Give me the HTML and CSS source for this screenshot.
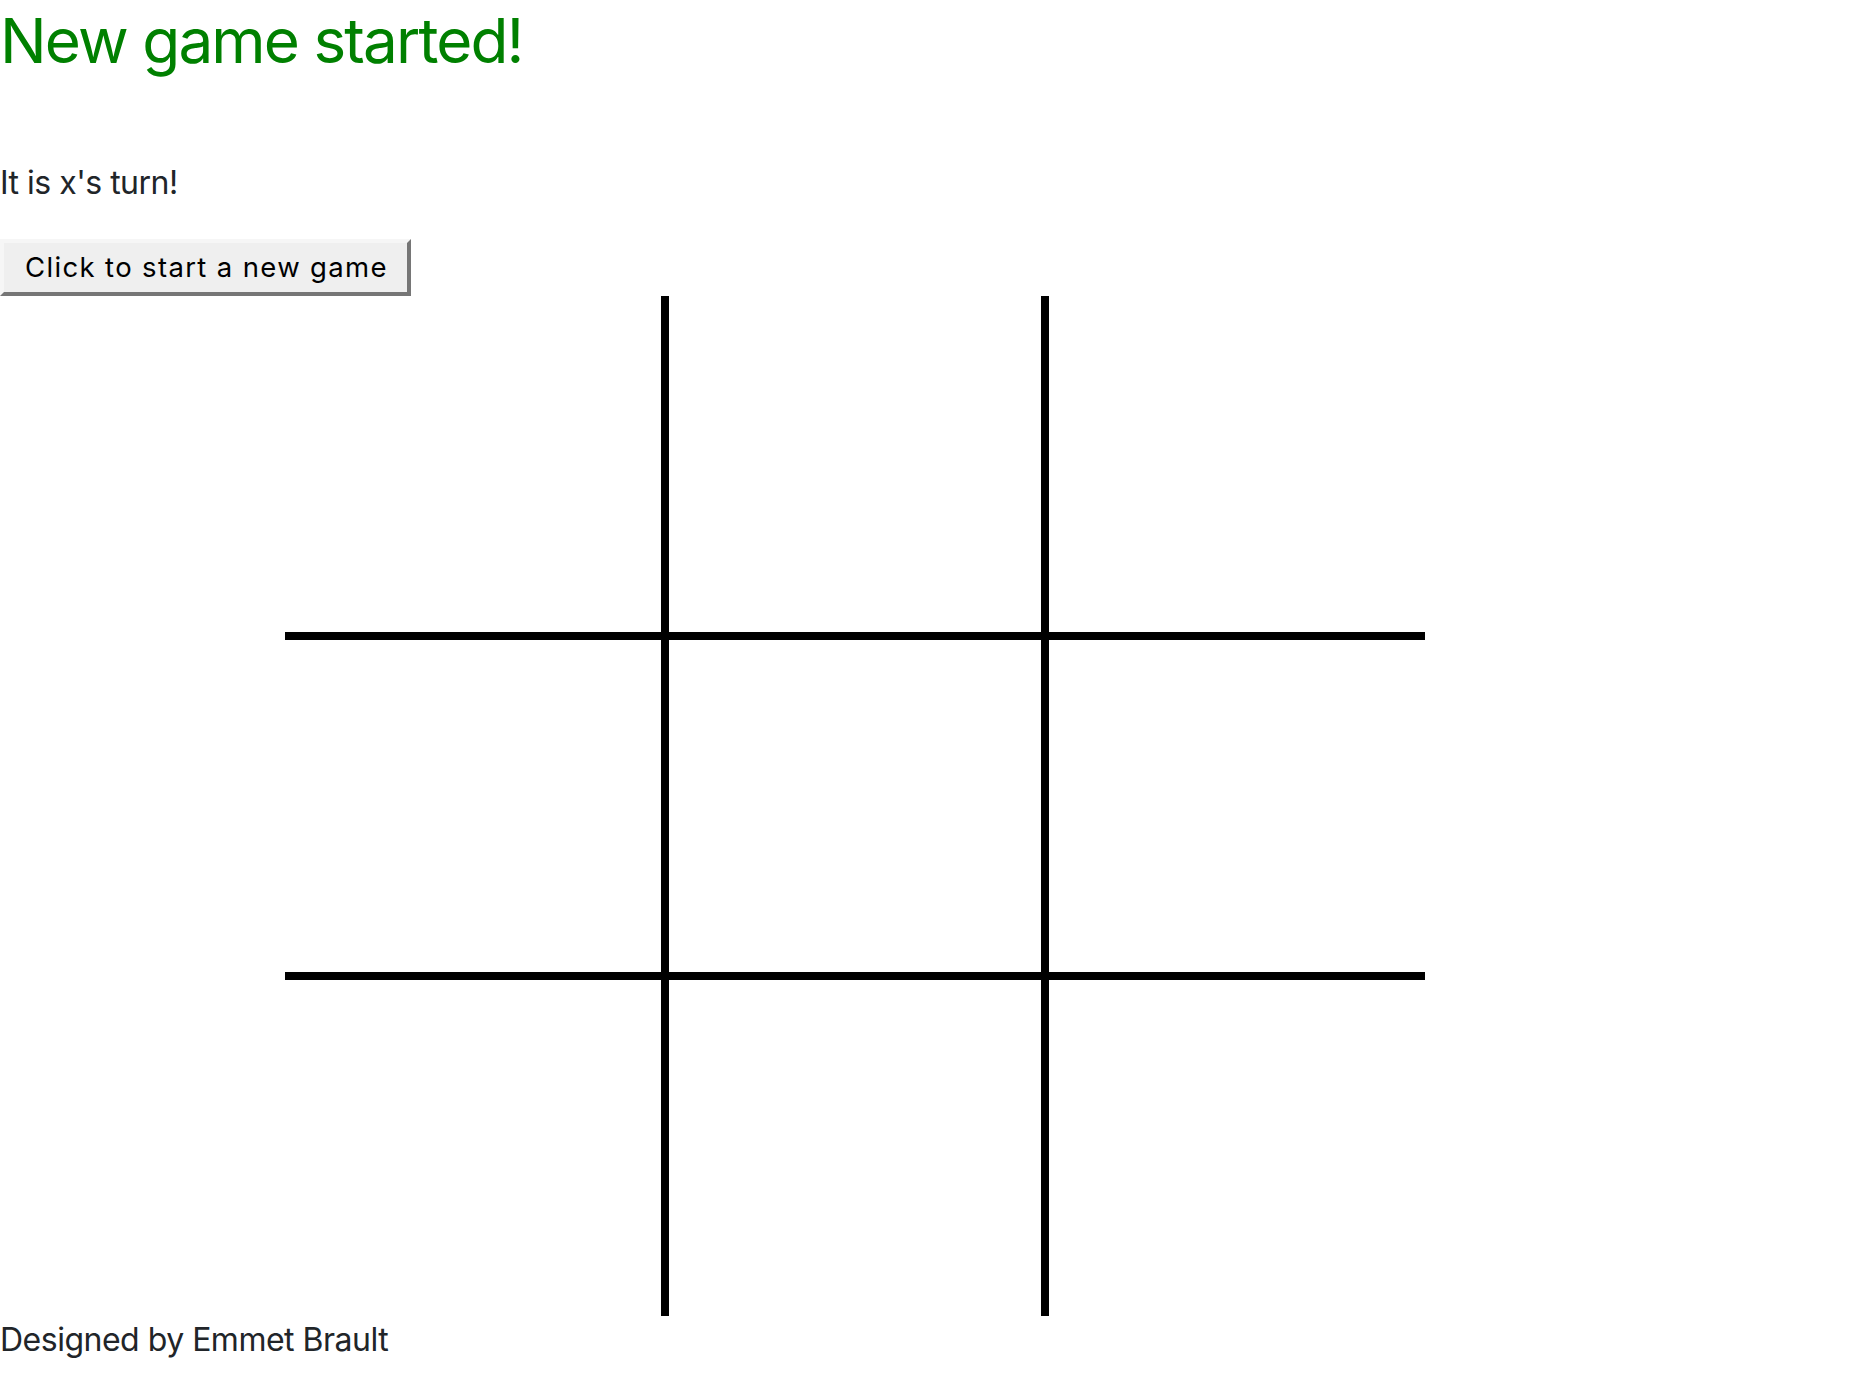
FILE: index.html
```html
<!DOCTYPE html>
<html lang="en">
<head>
<meta charset="utf-8">
<title>Tic Tac Toe</title>
<link rel="stylesheet" href="styles.css">
</head>
<body>
<h1 class="status">New game started!</h1>
<p class="turn">It is x's turn!</p>
<button class="new-game" type="button">Click to start a new game</button>
<div class="board">
  <div class="cell"></div>
  <div class="cell"></div>
  <div class="cell"></div>
  <div class="cell"></div>
  <div class="cell"></div>
  <div class="cell"></div>
  <div class="cell"></div>
  <div class="cell"></div>
  <div class="cell"></div>
</div>
<footer class="credit">Designed by Emmet Brault</footer>
</body>
</html>
```

FILE: styles.css
```css
html, body {
  margin: 0;
  padding: 0;
  background: #ffffff;
}

body {
  font-family: Inter, "Noto Sans", "Liberation Sans", sans-serif;
  color: #212529;
  font-size: 32px;
  line-height: 48px;
  letter-spacing: -0.5px;
}

.status {
  margin: 0;
  padding-top: 3px;
  color: #008000;
  font-size: 62px;
  font-weight: 400;
  line-height: 76px;
  letter-spacing: -1.9px;
}

.turn {
  margin: 80px 0 32px 0;
}

.new-game {
  display: block;
  box-sizing: border-box;
  width: 411px;
  margin: 0;
  font-family: Inter, "Noto Sans", "Liberation Sans", sans-serif;
  font-size: 27.5px;
  line-height: 33px;
  letter-spacing: 1.35px;
  text-align: center;
  color: #000000;
  background: #efefef;
  border-style: solid;
  border-width: 4px;
  border-color: #f6f6f6 #767676 #767676 #f6f6f6;
  padding: 8px 16px 8px 18px;
}

.board {
  display: grid;
  grid-template-columns: 376px 372px 376px;
  grid-template-rows: 336px 332px 336px;
  gap: 8px;
  background: #000000;
  width: 1140px;
  margin: 0 0 0 285px;
}

.cell {
  background: #ffffff;
}

.credit {
  margin: 0;
}
```
